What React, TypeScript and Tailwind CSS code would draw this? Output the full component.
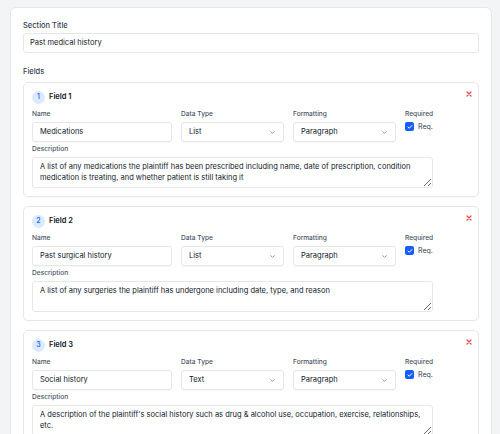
import React from "react";

const fields = [
  {
    n: 1,
    name: "Medications",
    type: "List",
    fmt: "Paragraph",
    desc: "A list of any medications the plaintiff has been prescribed including name, date of prescription, condition medication is treating, and whether patient is still taking it",
  },
  {
    n: 2,
    name: "Past surgical history",
    type: "List",
    fmt: "Paragraph",
    desc: "A list of any surgeries the plaintiff has undergone including date, type, and reason",
  },
  {
    n: 3,
    name: "Social history",
    type: "Text",
    fmt: "Paragraph",
    desc: "A description of the plaintiff's social history such as drug & alcohol use, occupation, exercise, relationships, etc.",
  },
];

function Chevron() {
  return (
    <svg width="7" height="7" viewBox="0 0 24 24" fill="none" stroke="#6b7280" strokeWidth="2.5" strokeLinecap="round" strokeLinejoin="round">
      <path d="m6 9 6 6 6-6" />
    </svg>
  );
}

function Label({ children }: { children: React.ReactNode }) {
  return <div className="h-[9px] text-[6.6px] leading-[9px] text-gray-600 font-medium mb-[3px]">{children}</div>;
}

function Box({ children, className = "" }: { children: React.ReactNode; className?: string }) {
  return (
    <div className={"h-[20px] rounded-[3px] border border-gray-200 bg-white shadow-[0_1px_1px_rgba(0,0,0,0.03)] flex items-center text-[7.5px] text-gray-900 " + className}>
      {children}
    </div>
  );
}

function FieldCard({ f }: { f: (typeof fields)[number] }) {
  return (
    <div className="relative rounded-[5px] border border-gray-200 bg-white pl-[8px] pr-[45px] pt-[8px] pb-[8px] shadow-[0_1px_1px_rgba(0,0,0,0.02)]">
      <svg className="absolute right-[6px] top-[8px]" width="6" height="6" viewBox="0 0 6 6" fill="none" stroke="#ef4444" strokeWidth="1.2" strokeLinecap="round">
        <path d="M1 1l4 4M5 1L1 5" />
      </svg>
      <div className="flex items-center gap-[4px] h-[12px]">
        <div className="w-[13px] h-[13px] rounded-full bg-blue-100 text-blue-600 text-[7px] font-medium flex items-center justify-center">{f.n}</div>
        <div className="text-[7.5px] font-semibold text-gray-900">Field {f.n}</div>
      </div>
      <div className="grid grid-cols-[140px_103px_103px_28px] gap-x-[9px] mt-[7px]">
        <div>
          <Label>Name</Label>
          <Box className="px-[7px]">{f.name}</Box>
        </div>
        <div>
          <Label>Data Type</Label>
          <Box className="pl-[7px] pr-[7px] justify-between">
            <span>{f.type}</span>
            <Chevron />
          </Box>
        </div>
        <div>
          <Label>Formatting</Label>
          <Box className="pl-[7px] pr-[7px] justify-between">
            <span>{f.fmt}</span>
            <Chevron />
          </Box>
        </div>
        <div>
          <Label>Required</Label>
          <div className="flex items-center gap-[4px] mt-[1px]">
            <div className="w-[9px] h-[9px] rounded-[2px] bg-blue-600 flex items-center justify-center">
              <svg width="6" height="6" viewBox="0 0 24 24" fill="none" stroke="white" strokeWidth="4" strokeLinecap="round" strokeLinejoin="round">
                <path d="M20 6 9 17l-5-5" />
              </svg>
            </div>
            <span className="text-[7px] text-gray-700 leading-[9px]">Req.</span>
          </div>
        </div>
      </div>
      <div className="mt-[3px]">
        <Label>Description</Label>
        <textarea
          readOnly
          value={f.desc}
          className="block w-full h-[31px] rounded-[3px] border border-gray-200 bg-white px-[7px] py-[4px] text-[7.5px] leading-[10.5px] text-gray-900 outline-none"
        />
      </div>
    </div>
  );
}

export default function App() {
  return (
    <div className="w-[500px] h-[434px] overflow-hidden bg-gray-100 pt-[7px] pl-[10px] pr-[8px]" style={{ fontFamily: "Inter, 'Noto Sans', sans-serif" }}>
      <div className="rounded-[6px] border border-gray-200 bg-white px-[12px] pt-[13px] pb-[12px] min-h-[500px]">
        <div className="h-[9px] text-[7.5px] leading-[9px] font-medium text-gray-700 mb-[3px]">Section Title</div>
        <div className="h-[20px] rounded-[3px] border border-gray-200 bg-white flex items-center px-[6px] text-[7.5px] text-gray-900">Past medical history</div>
        <div className="h-[9px] text-[7.5px] leading-[9px] font-medium text-gray-700 mt-[14px] mb-[6px]">Fields</div>
        <div className="flex flex-col gap-[9px]">
          {fields.map((f) => (
            <FieldCard key={f.n} f={f} />
          ))}
        </div>
      </div>
    </div>
  );
}
